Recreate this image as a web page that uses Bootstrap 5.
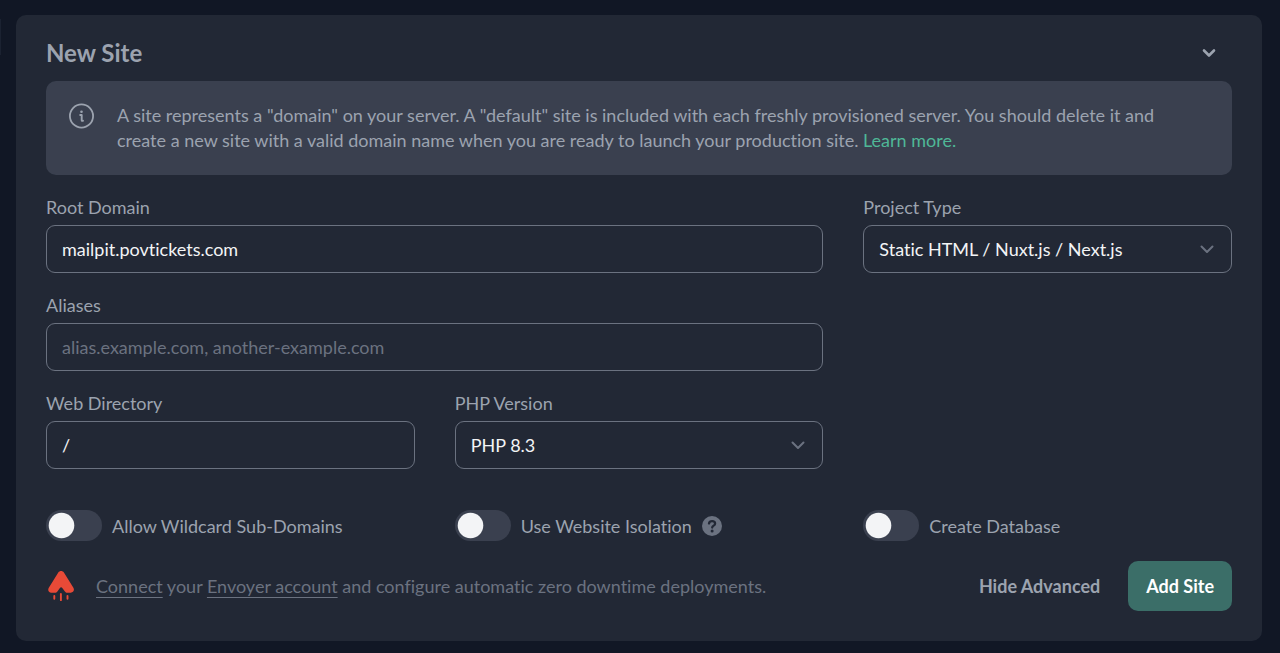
<!DOCTYPE html>
<html lang="en" data-bs-theme="dark">
<head>
<meta charset="utf-8">
<meta name="viewport" content="width=device-width, initial-scale=1">
<title>New Site</title>
<link href="https://cdn.jsdelivr.net/npm/bootstrap@5.3.0/dist/css/bootstrap.min.css" rel="stylesheet">
<style>
  body {
    background: #111725;
    color: #9ca3af;
    font-family: Lato, "Open Sans", sans-serif;
    font-size: 18px;
    line-height: 24px;
  }
  body, input, select, button { font-variant-ligatures: none; }
  .page { padding: 15px 18px 12px 0; }
  .side-edge { width: 1px; height: 36px; margin: 4px 15px 0 0; background: #1b2231; }
  .panel {
    --bs-card-bg: #222835;
    --bs-card-border-width: 0;
    --bs-card-border-radius: 10px;
    color: #9ca3af;
    padding: 22px 30px 30px;
  }
  .panel-title { font-size: 24px; line-height: 32px; font-weight: 700; margin: 0; color: #9ca3af; }
  .panel-head { margin-bottom: 12px; padding-right: 16px; }
  .plain { background: none; border: 0; padding: 0; color: inherit; }
  .notice {
    background: #3a404f;
    color: #9ca3af;
    border: 0;
    border-radius: 10px;
    padding: 22px 60px 22px 22px;
    margin-bottom: 20px;
    gap: 22px;
    line-height: 25px;
  }
  .notice a { color: #4fb897; text-decoration: none; }
  .fields { --bs-gutter-x: 40px; row-gap: 20px; }
  .fields label { display: block; margin-bottom: 6px; }
  .fields .form-control, .fields .form-select {
    height: 48px;
    padding: 0 15px;
    font-size: 18px;
    color: #f3f4f6;
    background-color: transparent;
    border: 1px solid #6b7280;
    border-radius: 9px;
  }
  .fields .form-control::placeholder { color: #6b7280; opacity: 1; }
  .fields .form-select {
    background-image: url("data:image/svg+xml,%3Csvg xmlns='http://www.w3.org/2000/svg' viewBox='0 0 16 16'%3E%3Cpath d='M2.500 5.500 8 11l5.500-5.500' fill='none' stroke='%236b7280' stroke-width='2' stroke-linecap='round' stroke-linejoin='round'/%3E%3C/svg%3E");
    background-position: right 16px center;
    background-size: 16px 16px;
    background-repeat: no-repeat;
  }
  .toggles { --bs-gutter-x: 40px; margin-top: 41px; margin-bottom: 20px; }
  .toggles .form-check { padding: 0; margin: 0; min-height: 0; gap: 10px; }
  .toggles .form-check-input {
    width: 56px;
    height: 31px;
    margin: 0;
    border: 0;
    float: none;
    background-color: #3a404f;
  }
  .toggles .form-check-input:not(:checked) {
    background-image: url("data:image/svg+xml,%3Csvg xmlns='http://www.w3.org/2000/svg' viewBox='-4 -4 8 8'%3E%3Ccircle r='3.300' fill='%23f3f4f6'/%3E%3C/svg%3E");
  }
  .footer-note { color: #6b7280; }
  .footer-note a { color: inherit; text-underline-offset: 4px; text-decoration-thickness: 1px; }
  .actions { gap: 28px; }
  .strong { font-weight: 700; }
  .btn-add {
    --bs-btn-bg: #3b6e68;
    --bs-btn-color: #fff;
    --bs-btn-hover-bg: #447d76;
    --bs-btn-hover-color: #fff;
    --bs-btn-font-size: 18px;
    --bs-btn-font-weight: 700;
    --bs-btn-padding-x: 18px;
    --bs-btn-padding-y: 12px;
    --bs-btn-border-radius: 10px;
    --bs-btn-border-width: 0;
    line-height: 26px;
  }
</style>
</head>
<body>
<div class="page d-flex align-items-start">
  <div class="side-edge flex-shrink-0"></div>
  <main class="card panel flex-grow-1">
    <header class="panel-head d-flex justify-content-between align-items-center">
      <h1 class="panel-title">New Site</h1>
      <button type="button" class="plain d-flex" aria-label="Collapse">
        <svg width="14" height="14" viewBox="0 0 14 14" fill="none" stroke="currentColor" stroke-width="2.600" stroke-linecap="round" stroke-linejoin="round"><path d="M2 4.500 7 9.500l5-5"/></svg>
      </button>
    </header>

    <div class="alert notice d-flex">
      <svg class="flex-shrink-0" width="27" height="27" viewBox="0 0 27 27" fill="none" stroke="currentColor" aria-hidden="true"><circle cx="13.500" cy="13" r="11.600" stroke-width="1.800"/><path d="M12.200 12h1.500v5.200c0 .6.500.8 1.300.6" stroke-width="1.900" stroke-linecap="round" stroke-linejoin="round"/><circle cx="13.500" cy="8.800" r="1.300" fill="currentColor" stroke="none"/></svg>
      <div>A site represents a "domain" on your server. A "default" site is included with each freshly provisioned server. You should delete it and create a new site with a valid domain name when you are ready to launch your production site. <a href="#">Learn more.</a></div>
    </div>

    <form>
      <div class="row fields">
        <div class="col-8">
          <label for="domain">Root Domain</label>
          <input id="domain" type="text" class="form-control" value="mailpit.povtickets.com">
        </div>
        <div class="col-4">
          <label for="type">Project Type</label>
          <select id="type" class="form-select"><option>Static HTML / Nuxt.js / Next.js</option></select>
        </div>
        <div class="col-8 me-auto">
          <label for="aliases">Aliases</label>
          <input id="aliases" type="text" class="form-control" placeholder="alias.example.com, another-example.com">
        </div>
        <div class="col-12">
          <div class="row fields">
            <div class="col-4">
              <label for="dir">Web Directory</label>
              <input id="dir" type="text" class="form-control" value="/">
            </div>
            <div class="col-4">
              <label for="php">PHP Version</label>
              <select id="php" class="form-select"><option>PHP 8.3</option></select>
            </div>
          </div>
        </div>
      </div>

      <div class="row toggles">
        <div class="col-4">
          <div class="form-check form-switch d-flex align-items-center">
            <input class="form-check-input" type="checkbox" role="switch" id="wildcard">
            <label for="wildcard">Allow Wildcard Sub-Domains</label>
          </div>
        </div>
        <div class="col-4">
          <div class="form-check form-switch d-flex align-items-center">
            <input class="form-check-input" type="checkbox" role="switch" id="isolation">
            <label for="isolation">Use Website Isolation</label>
            <svg width="20" height="20" viewBox="0 0 20 20" fill="none" aria-hidden="true"><circle cx="10" cy="10" r="10" fill="#6b7280"/><path d="M7 7.400C7.300 5.900 8.500 5.200 10.100 5.200c1.700 0 3 1 3 2.500 0 2-2.900 1.900-2.900 3.900" stroke="#222835" stroke-width="2.300" stroke-linecap="round" stroke-linejoin="round"/><circle cx="10.100" cy="15" r="1.500" fill="#222835"/></svg>
          </div>
        </div>
        <div class="col-4">
          <div class="form-check form-switch d-flex align-items-center">
            <input class="form-check-input" type="checkbox" role="switch" id="database">
            <label for="database">Create Database</label>
          </div>
        </div>
      </div>

      <div class="d-flex justify-content-between align-items-center">
        <div class="footer-note d-flex align-items-center gap-3">
          <svg class="me-1" width="30" height="30" viewBox="0 0 30 30" aria-hidden="true"><path d="M12.300 1.600c1.300-2 4.300-2 5.600 0l9.500 15.200c1.400 2.300-.2 4.900-2.600 4.900h-3.500c-1 0-1.800-.5-2.400-1.300l-2.600-3.500c-.7-.9-1.700-.9-2.400 0l-2.500 3.500c-.6.800-1.400 1.300-2.400 1.300H5.300c-2.500 0-3.900-2.600-2.500-4.900z" fill="#e84a37"/><path d="M14.900 23v6.200M8.300 25v2.700M21.500 25v2.700" stroke="#e84a37" stroke-width="1.900" stroke-linecap="round"/></svg>
          <div><a href="#">Connect</a> your <a href="#">Envoyer account</a> and configure automatic zero downtime deployments.</div>
        </div>
        <div class="actions d-flex align-items-center">
          <button type="button" class="plain strong">Hide Advanced</button>
          <button type="submit" class="btn btn-add">Add Site</button>
        </div>
      </div>
    </form>
  </main>
</div>
<script src="https://cdn.jsdelivr.net/npm/bootstrap@5.3.0/dist/js/bootstrap.bundle.min.js"></script>
</body>
</html>
